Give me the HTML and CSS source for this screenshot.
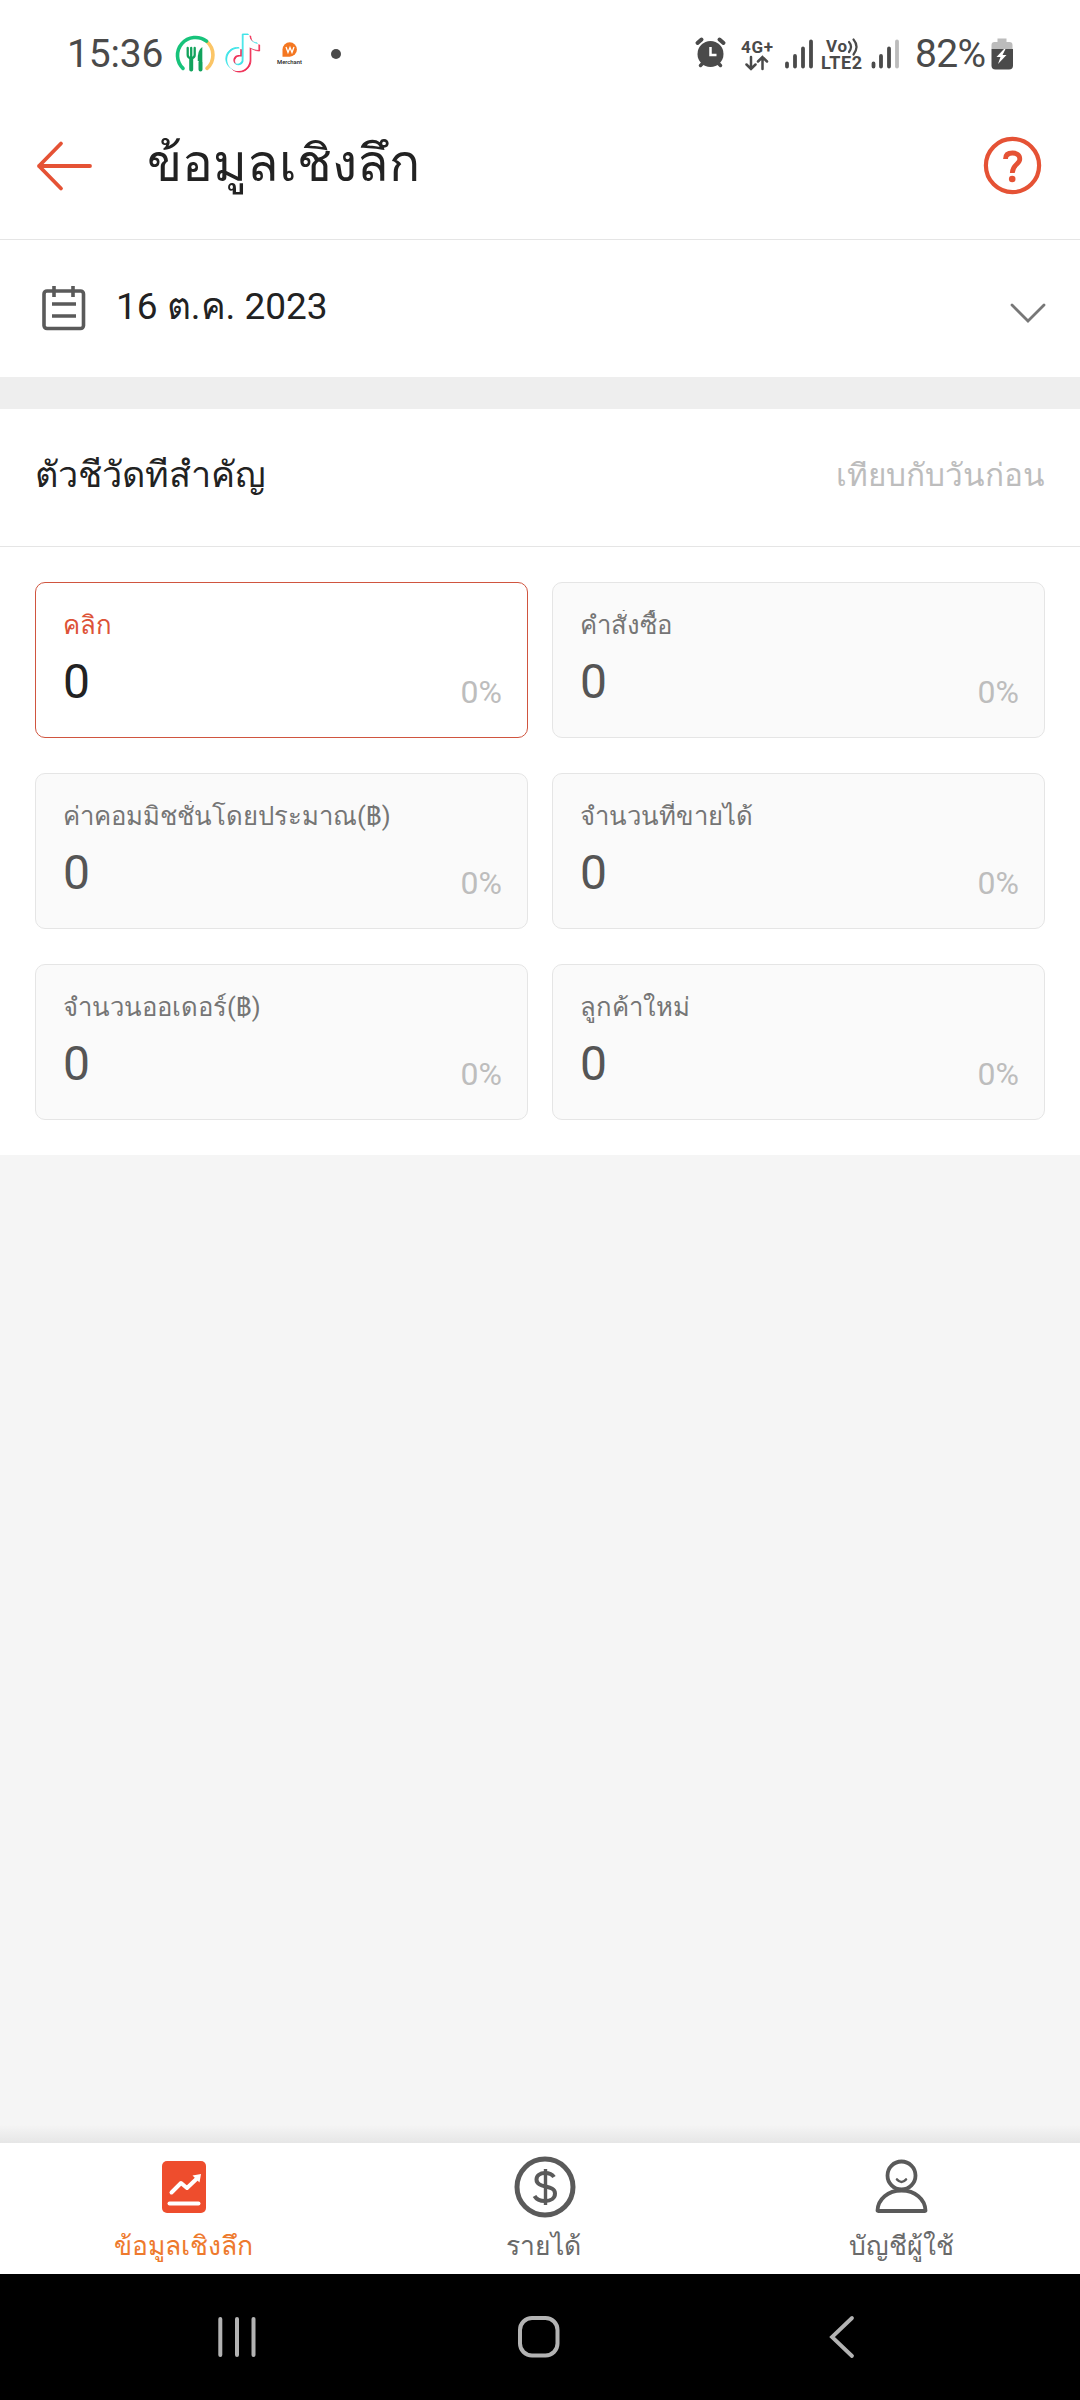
FILE: index.html
```html
<!DOCTYPE html>
<html lang="th">
<head>
<meta charset="utf-8">
<title>ข้อมูลเชิงลึก</title>
<link rel="stylesheet" href="styles.css">
</head>
<body>
<div class="screen">
  <div class="status">
    <div class="status-left">
      <span class="clock">15:36</span>
      <svg class="food" width="40" height="40" viewBox="0 0 40 40" fill="none">
        <path d="M31.800 6.500 A18 18 0 0 1 32 33.400" stroke="#fbc566" stroke-width="3.600" stroke-linecap="round"/>
        <path d="M8 33.400A18 18 0 0 1 31.500 6.200" stroke="#17c37b" stroke-width="3.600" stroke-linecap="round"/>
        <path d="M12.700 13v7q0 3 3.500 3t3.500-3v-7M16.200 13v22" stroke="#12a35c" stroke-width="2.300" stroke-linecap="round"/>
        <path d="M16.200 24v10.500M25.500 27v7.500" stroke="#12a35c" stroke-width="4" stroke-linecap="round"/>
        <path d="M27.300 12q-5 3-4.600 14h4.600z" fill="#12a35c"/>
      </svg>
      <svg class="note" width="36" height="42" viewBox="0 0 36 42">
        <defs><path id="note" d="M12.525.02c1.31-.02 2.61-.01 3.91-.02.08 1.53.63 3.09 1.75 4.17 1.12 1.11 2.7 1.62 4.24 1.79v4.03c-1.44-.05-2.89-.35-4.2-.97-.57-.26-1.1-.59-1.62-.93-.01 2.92.01 5.84-.02 8.75-.08 1.4-.54 2.79-1.35 3.94-1.31 1.92-3.58 3.17-5.91 3.21-1.43.08-2.86-.31-4.08-1.03-2.02-1.19-3.44-3.37-3.65-5.71-.02-.5-.03-1-.01-1.49.18-1.9 1.12-3.72 2.58-4.96 1.66-1.44 3.98-2.13 6.15-1.72.02 1.48-.04 2.96-.04 4.44-.99-.32-2.15-.23-3.02.37-.63.41-1.11 1.04-1.36 1.75-.21.51-.15 1.07-.14 1.61.24 1.64 1.82 3.02 3.5 2.87 1.12-.01 2.19-.66 2.77-1.61.19-.33.4-.67.41-1.06.1-1.79.06-3.57.07-5.36.01-4.03-.01-8.05.02-12.07z"/></defs>
        <use href="#note" fill="#ef2f56" stroke="#ef2f56" stroke-width=".6" transform="translate(1 3) scale(1.500)"/>
        <use href="#note" fill="#3fe4e8" stroke="#3fe4e8" stroke-width=".6" transform="translate(-1.500 1) scale(1.500)"/>
        <use href="#note" fill="#fff" transform="translate(-.2 2) scale(1.500)"/>
      </svg>
      <svg class="merchant" width="28" height="24" viewBox="0 0 28 24">
        <path d="M6.500 7.500a7.200 7.200 0 1 1 7.200 7.200H6.500z" fill="#f47721"/>
        <path d="m10 5 2 5.500L14 5.500l2 5L18 5" fill="none" stroke="#fff" stroke-width="1.300"/>
        <text x="1" y="21.500" font-size="6" textLength="25" lengthAdjust="spacingAndGlyphs" font-weight="500" fill="#222">Merchant</text>
      </svg>
      <span class="dot"></span>
    </div>
    <svg class="status-right" width="330" height="50" viewBox="0 0 330 50" fill="none" stroke="#4a4a4a" stroke-linecap="round">
      <circle cx="20.500" cy="24" r="13" fill="#4a4a4a" stroke="none"/>
      <path d="m7.500 13 4-3.500M33.500 13l-4-3.500" stroke-width="4"/>
      <path d="m10.500 35.500 3-3M30.500 35.500l-3-3" stroke-width="3.500"/>
      <path d="M20.500 17v8h6" stroke="#fff" stroke-width="2.500" stroke-linecap="butt"/>
      <g fill="#4a4a4a" stroke="none">
        <text x="51" y="22.500" font-size="17" font-weight="700" textLength="32">4G+</text>
        <text x="136" y="21.500" font-size="17" font-weight="700" textLength="21">Vo</text>
        <text x="131" y="39" font-size="18" font-weight="700" textLength="41">LTE2</text>
        <text x="225" y="36.700" font-size="39" textLength="71">82%</text>
      </g>
      <path d="M61 27v12m-4.500-4.500L61 39l4.500-4.500M72.500 39V27M68 31.500l4.500-4.500 4.500 4.500" stroke-width="2.500"/>
      <path d="M159 12q4 4.500 0 10M163.500 9.500q6 7 0 15" stroke-width="2.200"/>
      <path d="M97 33.500v3M105 26v10.500M113 18.500v18M121 11.500v25M183.500 33.500v3M191 26v10.500M199 18.500v18" stroke-width="3.800"/>
      <path d="M207 11.500v25" stroke="#bcbcbc" stroke-width="3.800"/>
      <path d="M302 20v-4q0-3 3-3h3V9.500h9V13h3q3 0 3 3v4z" transform="translate(-.5 -1)" fill="#bcbcbc" stroke="none"/>
      <path d="M301.500 19h21.500v16.500q0 4-4 4h-13.500q-4 0-4-4z" fill="#4a4a4a" stroke="none"/>
      <path d="M314 19l-7.500 8h4l-2.500 7 8.500-9h-4l3-6z" fill="#fff" stroke="none"/>
    </svg>
  </div>

  <header class="titlebar">
    <svg width="56" height="50" viewBox="0 0 56 50" fill="none" stroke="#e55235" stroke-width="3.800" stroke-linecap="round" stroke-linejoin="round"><path d="M53 25H2M24 2.500 2 25l22 22.500"/></svg>
    <h1>ข้อมูลเชิงลึก</h1>
    <svg class="help" width="58" height="58" viewBox="0 0 58 58" fill="none" stroke="#e55235"><circle cx="28.500" cy="28.500" r="26.600" stroke-width="4.200"/><path d="M21.500 22c0-4.500 3-6 7-6s7.300 2 7.300 6c0 5.500-7.500 5.500-7.500 14" stroke-width="4.800"/><circle cx="28.200" cy="42" r="3.300" fill="#e55235" stroke="none"/></svg>
  </header>

  <div class="date">
    <svg width="44" height="46" viewBox="0 0 44 46" fill="none" stroke="#5a5a5a" stroke-width="3.600"><rect x="2" y="5" width="39.500" height="37.500" rx="3"/><path d="M12 0v11M31 0v11M10 18h24M10 30h24"/></svg>
    <span class="date-text">16 ต.ค. 2023</span>
    <svg class="chev" width="36" height="20" viewBox="0 0 36 20" fill="none" stroke="#777" stroke-width="2.800" stroke-linecap="round"><path d="m2 2 16 16L34 2"/></svg>
  </div>

  <section class="metrics">
    <div class="metrics-head"><h2>ตัวชี้วัดที่สำคัญ</h2><span class="compare">เทียบกับวันก่อน</span></div>
    <div class="grid">
      <div class="card active"><div class="label">คลิก</div><div class="row"><span class="value">0</span><span class="pct">0%</span></div></div>
      <div class="card"><div class="label">คำสั่งซื้อ</div><div class="row"><span class="value">0</span><span class="pct">0%</span></div></div>
      <div class="card"><div class="label">ค่าคอมมิชชั่นโดยประมาณ(฿)</div><div class="row"><span class="value">0</span><span class="pct">0%</span></div></div>
      <div class="card"><div class="label">จำนวนที่ขายได้</div><div class="row"><span class="value">0</span><span class="pct">0%</span></div></div>
      <div class="card"><div class="label">จำนวนออเดอร์(฿)</div><div class="row"><span class="value">0</span><span class="pct">0%</span></div></div>
      <div class="card"><div class="label">ลูกค้าใหม่</div><div class="row"><span class="value">0</span><span class="pct">0%</span></div></div>
    </div>
  </section>

  <div class="empty"></div>
  <div class="fade"></div>

  <nav class="tabs">
    <div class="tab current">
      <svg width="62" height="62" viewBox="0 0 62 62" fill="none" stroke="#fff" stroke-linecap="round"><rect x="9" y="5" width="44" height="52" rx="5" fill="#ee4d2d" stroke="none"/><path d="m18.500 36.500 9.500-9.500 6 5 11-10.500" stroke-width="4" stroke-linejoin="round"/><path d="m39.500 19.500 8.500-1.500-1.500 8.500z" fill="#fff" stroke="none"/><path d="M16.500 47.500h29" stroke-width="4"/></svg>
      <span class="tab-label">ข้อมูลเชิงลึก</span>
    </div>
    <div class="tab">
      <svg width="62" height="62" viewBox="0 0 62 62" fill="none" stroke="#5a5a5a"><circle cx="31" cy="31" r="28" stroke-width="5"/><path d="M40 21c-2-3-5-4-9-4-5 0-8.500 2.500-8.500 6.500 0 9.500 18.500 4.500 18.500 14 0 4.500-4 7.500-10 7.500-5 0-8.500-1.500-10.500-5" stroke-width="4"/><path d="M31.500 13v36" stroke-width="3.400"/></svg>
      <span class="tab-label">รายได้</span>
    </div>
    <div class="tab">
      <svg width="62" height="62" viewBox="0 0 62 62" fill="none" stroke="#5a5a5a" stroke-width="3.800" stroke-linejoin="round" stroke-linecap="round"><circle cx="30.500" cy="19.500" r="14"/><path d="M6.500 54.500C7 43 17 34.500 30.500 34.500S54 43 54.500 54.500q0 .500-1 .500h-46q-1 0-1-.500z"/><path d="M26 23.500q4.500 5 9 0" stroke-width="2.600"/></svg>
      <span class="tab-label">บัญชีผู้ใช้</span>
    </div>
  </nav>

  <div class="sysnav">
    <svg width="44" height="44" viewBox="0 0 44 44" fill="none" stroke="#b3b3b3" stroke-width="4" stroke-linecap="round"><path d="M5.300 4v36M22 4v36M38.500 4v36"/></svg>
    <svg width="44" height="44" viewBox="0 0 44 44" fill="none" stroke="#b3b3b3" stroke-width="4"><rect x="2" y="3" width="37.500" height="37.500" rx="12"/></svg>
    <svg width="44" height="44" viewBox="0 0 44 44" fill="none" stroke="#b3b3b3" stroke-width="3.800" stroke-linecap="round"><path d="M32 3 12 22l20 19"/></svg>
  </div>
</div>
</body>
</html>
```
FILE: styles.css
```css
* { box-sizing: border-box; margin: 0; padding: 0; }
body { width: 1080px; height: 2400px; background: #f5f5f5; font-family: Roboto, sans-serif; color: #222; }
svg { display: block; flex: none; overflow: visible; }
.screen { width: 1080px; height: 2400px; display: flex; flex-direction: column; overflow: hidden; }
.screen > * { flex: none; }
.status { height: 110px; background: #fff; display: flex; justify-content: space-between; padding: 20px 60px 0 67px; }
.status-right { margin-top: 10px; }
.status-left { display: flex; align-items: flex-start; color: #4a4a4a; }
.clock { font-size: 39px; line-height: 68px; width: 108px; white-space: nowrap; letter-spacing: -0.2px; }
.food { margin-top: 15px; }
.note { margin: 13px 0 0 10px; }
.merchant { margin: 22px 0 0 15px; }
.dot { width: 10px; height: 10px; border-radius: 50%; background: #4a4a4a; margin: 29px 0 0 27px; }
.titlebar { height: 130px; background: #fff; border-bottom: 1px solid #e5e5e5; display: flex; align-items: center; padding: 0 38px 18px 37px; }
.titlebar h1 { font-size: 51.500px; font-weight: 400; line-height: 80px; margin: -3px 0 0 54px; white-space: nowrap; }
.help { margin-left: auto; }
.date { height: 137px; background: #fff; display: flex; align-items: center; padding: 0 34px 0 42px; }
.date-text { font-size: 37px; line-height: 60px; margin: -3px 0 0 30px; }
.chev { margin-left: auto; margin-top: 8px; }
.metrics { border-top: 32px solid #eee; background: #fff; height: 778px; }
.metrics-head { height: 138px; border-bottom: 1px solid #e5e5e5; display: flex; justify-content: space-between; align-items: flex-start; padding: 48px 35px 0; }
/* tight line boxes trim the stacked tone marks */
.metrics-head h2 { font-size: 36px; font-weight: 400; line-height: 36px; padding-bottom: 12px; overflow: hidden; white-space: nowrap; }
.compare { font-size: 31.500px; line-height: 30px; padding-bottom: 8px; margin-top: 4px; color: #bdbdbd; overflow: hidden; white-space: nowrap; }
.grid { display: grid; grid-template-columns: 493px 493px; grid-template-rows: repeat(3, 156px); column-gap: 24px; row-gap: 35px; padding: 35px; }
.card { border: 1px solid #e5e5e5; border-radius: 10px; background: #fafafa; padding: 27px 25px 0 27px; color: #555; }
.card.active { background: #fff; border-color: #d0553f; color: #222; }
.label { font-size: 25.700px; line-height: 30px; height: 38px; color: #757575; white-space: nowrap; overflow: hidden; }
.active .label { color: #dd5237; }
.row { display: flex; justify-content: space-between; align-items: flex-start; }
.value { font-size: 48px; line-height: 56px; margin-top: 6px; }
.pct { font-size: 32px; line-height: 38px; margin-top: 25px; color: #bdbdbd; }
.empty { height: 970px; }
.fade { height: 18px; background: linear-gradient(#f5f5f5, #e6e6e6); }
.tabs { height: 131px; background: #fff; display: flex; justify-content: space-between; padding: 13px 78px 0 84px; }
.tab { display: flex; flex-direction: column; align-items: center; width: 200px; color: #6a6a6a; }
.tab:nth-child(2) { padding-left: 3px; }
.tab-label { font-size: 26.500px; line-height: 36px; margin: 10px 2px 0 0; white-space: nowrap; }
.current { color: #ee7a2d; }
.sysnav { height: 126px; background: #000; display: flex; align-items: flex-start; justify-content: space-between; padding: 41px 216px 0 215px; }
```
